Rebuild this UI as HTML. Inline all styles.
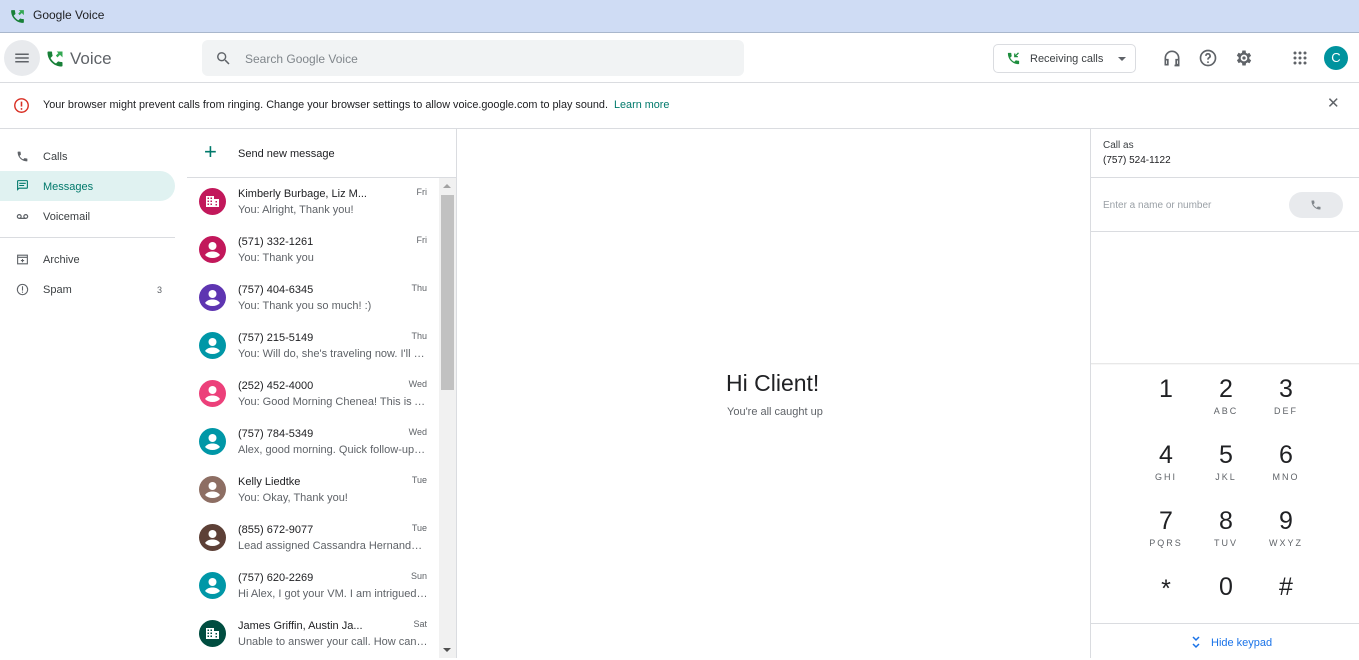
<!DOCTYPE html><html><head><meta charset="utf-8"><style>
*{box-sizing:border-box;margin:0;padding:0}
body{width:1359px;height:658px;overflow:hidden;font-family:"Liberation Sans",Arial,sans-serif;background:#fff;position:relative;color:#202124}
.a{position:absolute}
.row{position:absolute;left:187px;width:252px;height:48px}
.av{position:absolute;left:12px;top:8px;width:27px;height:27px;border-radius:50%}
.t{position:absolute;left:51px;top:8px;font-size:11px;color:#202124;white-space:nowrap}
.s{position:absolute;left:51px;top:24px;font-size:11px;color:#5f6368;white-space:nowrap;width:190px;overflow:hidden;text-overflow:ellipsis}
.d{position:absolute;right:12px;top:7px;font-size:9px;color:#5f6368}
.k{position:absolute;width:60px;text-align:center}
.k b{display:block;font-weight:normal;font-size:25px;color:#202124;line-height:26px}
.k i{display:block;font-style:normal;font-size:9px;letter-spacing:2px;color:#5f6368;margin-top:4px}
.nav{position:absolute;left:43px;font-size:11px;color:#3c4043}
</style></head><body>
<div class="a" style="left:0;top:0;width:1359px;height:33px;background:#cfdcf4;border-bottom:1px solid #a9b7cc"></div>
<svg class="a" style="left:9px;top:8px" width="17" height="17" viewBox="0 0 24 24"><path fill="#188038" d="M6.6 10.8c1.4 2.8 3.8 5.1 6.6 6.6l2.2-2.2c.3-.3.7-.4 1-.2 1.1.4 2.3.6 3.6.6.6 0 1 .4 1 1V20c0 .6-.4 1-1 1C10.6 21 3 13.4 3 4c0-.6.4-1 1-1h3.5c.6 0 1 .4 1 1 0 1.3.2 2.5.6 3.6.1.3 0 .7-.2 1z"/><path fill="#34a853" d="M14 3h7v7l-3-3-3 3-2-2 3-3z"/></svg>
<div class="a" style="left:33px;top:8px;font-size:12px;color:#202124">Google Voice</div>
<div class="a" style="left:0;top:82px;width:1359px;height:1px;background:#dadce0"></div>
<div class="a" style="left:4px;top:40px;width:36px;height:36px;border-radius:50%;background:#e8eaed"></div>
<svg class="a" style="left:13px;top:49px" width="18" height="18" viewBox="0 0 24 24"><path fill="#5f6368" d="M3 6h18v2H3zm0 5h18v2H3zm0 5h18v2H3z"/></svg>
<svg class="a" style="left:45px;top:49px" width="20" height="20" viewBox="0 0 24 24"><path fill="#188038" d="M6.6 10.8c1.4 2.8 3.8 5.1 6.6 6.6l2.2-2.2c.3-.3.7-.4 1-.2 1.1.4 2.3.6 3.6.6.6 0 1 .4 1 1V20c0 .6-.4 1-1 1C10.6 21 3 13.4 3 4c0-.6.4-1 1-1h3.5c.6 0 1 .4 1 1 0 1.3.2 2.5.6 3.6.1.3 0 .7-.2 1z"/><path fill="#34a853" d="M14 3h7v7l-3-3-3 3-2-2 3-3z"/></svg>
<div class="a" style="left:70px;top:49px;font-size:17px;color:#5f6368">Voice</div>
<div class="a" style="left:202px;top:40px;width:542px;height:36px;border-radius:6px;background:#f1f3f4"></div>
<svg class="a" style="left:215px;top:50px" width="17" height="17" viewBox="0 0 24 24"><path fill="#5f6368" d="M15.5 14h-.8l-.3-.3A6.5 6.5 0 1 0 9.5 16c1.6 0 3.1-.6 4.2-1.6l.3.3v.8l5 5 1.5-1.5-5-5zm-6 0C7 14 5 12 5 9.5S7 5 9.5 5 14 7 14 9.5 12 14 9.5 14z"/></svg>
<div class="a" style="left:245px;top:52px;font-size:12px;color:#80868b">Search Google Voice</div>
<div class="a" style="left:993px;top:44px;width:143px;height:29px;border:1px solid #dadce0;border-radius:5px"></div>
<svg class="a" style="left:1006px;top:51px" width="15" height="15" viewBox="0 0 24 24"><path fill="#1e8e3e" d="M6.6 10.8c1.4 2.8 3.8 5.1 6.6 6.6l2.2-2.2c.3-.3.7-.4 1-.2 1.1.4 2.3.6 3.6.6.6 0 1 .4 1 1V20c0 .6-.4 1-1 1C10.6 21 3 13.4 3 4c0-.6.4-1 1-1h3.5c.6 0 1 .4 1 1 0 1.3.2 2.5.6 3.6.1.3 0 .7-.2 1z"/><path fill="none" stroke="#1e8e3e" stroke-width="2" d="M20 3l-6 6m0-5v5h5"/></svg>
<div class="a" style="left:1030px;top:53px;font-size:11px;color:#3c4043">Receiving calls</div>
<div class="a" style="left:1118px;top:57px;border:4px solid transparent;border-top-color:#5f6368"></div>
<svg class="a" style="left:1162px;top:48px" width="20" height="20" viewBox="0 0 24 24"><path fill="none" stroke="#5f6368" stroke-width="2" d="M4 17v-5a8 8 0 0 1 16 0v5M4 14h3v6H4zM17 14h3v6h-3zM20 20v1h-5"/></svg>
<svg class="a" style="left:1198px;top:48px" width="20" height="20" viewBox="0 0 24 24"><circle cx="12" cy="12" r="9" fill="none" stroke="#5f6368" stroke-width="2"/><path fill="none" stroke="#5f6368" stroke-width="2" d="M9.5 9.5a2.5 2.5 0 1 1 3.5 2.3c-.7.4-1 .9-1 1.7v.5"/><circle cx="12" cy="17" r="1.1" fill="#5f6368"/></svg>
<svg class="a" style="left:1234px;top:48px" width="20" height="20" viewBox="0 0 24 24"><path fill="#5f6368" d="M19.4 13a7.5 7.5 0 0 0 0-2l2.1-1.6-2-3.5-2.5 1a7 7 0 0 0-1.7-1L15 3h-4l-.4 2.7c-.6.3-1.2.6-1.7 1l-2.5-1-2 3.5L6.6 11a7.5 7.5 0 0 0 0 2l-2.1 1.6 2 3.5 2.5-1c.5.4 1.1.7 1.7 1L11 21h4l.4-2.7c.6-.3 1.2-.6 1.7-1l2.5 1 2-3.5zM13 16a4 4 0 1 1 0-8 4 4 0 0 1 0 8z" transform="translate(-1 0)"/><circle cx="12" cy="12" r="2" fill="#5f6368"/></svg>
<svg class="a" style="left:1292px;top:50px" width="16" height="16" viewBox="0 0 16 16" fill="#5f6368"><circle cx="3" cy="3" r="1.5"/><circle cx="8" cy="3" r="1.5"/><circle cx="13" cy="3" r="1.5"/><circle cx="3" cy="8" r="1.5"/><circle cx="8" cy="8" r="1.5"/><circle cx="13" cy="8" r="1.5"/><circle cx="3" cy="13" r="1.5"/><circle cx="8" cy="13" r="1.5"/><circle cx="13" cy="13" r="1.5"/></svg>
<div class="a" style="left:1324px;top:46px;width:24px;height:24px;border-radius:50%;background:#00939e;color:#fff;font-size:13px;text-align:center;line-height:24px">C</div>
<svg class="a" style="left:13px;top:97px" width="17" height="17" viewBox="0 0 24 24"><circle cx="12" cy="12" r="9.5" fill="none" stroke="#d93025" stroke-width="2"/><path stroke="#d93025" stroke-width="2.2" d="M12 6.5v7"/><circle cx="12" cy="16.8" r="1.3" fill="#d93025"/></svg>
<div class="a" style="left:43px;top:99px;font-size:10.85px;color:#202124;white-space:nowrap">Your browser might prevent calls from ringing. Change your browser settings to allow voice.google.com to play sound. <span style="color:#00796b;margin-left:3px">Learn more</span></div>
<div class="a" style="left:1327px;top:94px;font-size:15px;color:#5f6368">✕</div>
<div class="a" style="left:0;top:128px;width:1359px;height:1px;background:#dadce0"></div>
<svg class="a" style="left:16px;top:150px" width="13" height="13" viewBox="0 0 24 24"><path fill="#5f6368" d="M6.6 10.8c1.4 2.8 3.8 5.1 6.6 6.6l2.2-2.2c.3-.3.7-.4 1-.2 1.1.4 2.3.6 3.6.6.6 0 1 .4 1 1V20c0 .6-.4 1-1 1C10.6 21 3 13.4 3 4c0-.6.4-1 1-1h3.5c.6 0 1 .4 1 1 0 1.3.2 2.5.6 3.6.1.3 0 .7-.2 1z"/></svg>
<div class="nav" style="top:151px">Calls</div>
<div class="a" style="left:0;top:171px;width:175px;height:30px;background:#e0f2f1;border-radius:0 15px 15px 0"></div>
<svg class="a" style="left:16px;top:179px" width="13" height="13" viewBox="0 0 24 24"><path fill="#00796b" d="M20 2H4a2 2 0 0 0-2 2v18l4-4h14a2 2 0 0 0 2-2V4a2 2 0 0 0-2-2zm0 14H5.2L4 17.2V4h16zM6 7h12v2H6zm0 4h9v2H6z"/></svg>
<div class="nav" style="top:181px;color:#00796b">Messages</div>
<svg class="a" style="left:15px;top:210px" width="15" height="13" viewBox="0 0 24 24"><path fill="none" stroke="#5f6368" stroke-width="2.2" d="M6 15.5a3.5 3.5 0 1 1 0-7 3.5 3.5 0 0 1 0 7h12a3.5 3.5 0 1 1 0-7 3.5 3.5 0 0 1 0 7"/></svg>
<div class="nav" style="top:211px">Voicemail</div>
<div class="a" style="left:0;top:237px;width:175px;height:1px;background:#dadce0"></div>
<svg class="a" style="left:16px;top:253px" width="13" height="13" viewBox="0 0 24 24"><path fill="none" stroke="#5f6368" stroke-width="2" d="M3 4h18v16H3zM3 8h18M12 11v6m-3-3h6"/></svg>
<div class="nav" style="top:254px">Archive</div>
<svg class="a" style="left:16px;top:283px" width="13" height="13" viewBox="0 0 24 24"><circle cx="12" cy="12" r="9.5" fill="none" stroke="#5f6368" stroke-width="2"/><path stroke="#5f6368" stroke-width="2" d="M12 6v8M12 16v2"/></svg>
<div class="nav" style="top:284px">Spam</div>
<div class="a" style="left:157px;top:285px;font-size:9px;color:#5f6368">3</div>
<div class="a" style="left:204px;top:142px;font-size:22px;color:#00796b;line-height:20px;font-weight:300">+</div>
<div class="a" style="left:238px;top:148px;font-size:11px;color:#202124">Send new message</div>
<div class="a" style="left:187px;top:177px;width:269px;height:1px;background:#dadce0"></div>
<div class="a" style="left:456px;top:129px;width:1px;height:529px;background:#dadce0"></div>
<div class="a" style="left:439px;top:178px;width:17px;height:480px;background:#f1f1f1"></div>
<div class="a" style="left:441px;top:195px;width:13px;height:195px;background:#c1c1c1"></div>
<div class="a" style="left:443px;top:184px;border:4px solid transparent;border-bottom-color:#a3a3a3;border-top:0"></div>
<div class="a" style="left:443px;top:648px;border:4px solid transparent;border-top-color:#505050;border-bottom:0"></div>
<div id="rows"></div>
<div class="a" style="left:726px;top:370px;font-size:23px;color:#202124">Hi Client!</div>
<div class="a" style="left:727px;top:406px;font-size:11px;color:#5f6368">You're all caught up</div>
<div class="a" style="left:1090px;top:129px;width:1px;height:529px;background:#dadce0"></div>
<div class="a" style="left:1103px;top:140px;font-size:10px;color:#3c4043">Call as</div>
<div class="a" style="left:1103px;top:155px;font-size:10px;color:#202124">(757) 524-1122</div>
<div class="a" style="left:1091px;top:177px;width:268px;height:1px;background:#dadce0"></div>
<div class="a" style="left:1103px;top:200px;font-size:10px;color:#9aa0a6">Enter a name or number</div>
<div class="a" style="left:1289px;top:192px;width:54px;height:26px;border-radius:13px;background:#e8eaed"></div>
<svg class="a" style="left:1310px;top:199px" width="12" height="12" viewBox="0 0 24 24"><path fill="#80868b" d="M6.6 10.8c1.4 2.8 3.8 5.1 6.6 6.6l2.2-2.2c.3-.3.7-.4 1-.2 1.1.4 2.3.6 3.6.6.6 0 1 .4 1 1V20c0 .6-.4 1-1 1C10.6 21 3 13.4 3 4c0-.6.4-1 1-1h3.5c.6 0 1 .4 1 1 0 1.3.2 2.5.6 3.6.1.3 0 .7-.2 1z"/></svg>
<div class="a" style="left:1091px;top:231px;width:268px;height:1px;background:#dadce0"></div>
<div class="a" style="left:1091px;top:363px;width:268px;height:2px;background:linear-gradient(#e0e0e0,#fff)"></div>
<div class="k" style="left:1136px;top:376px"><b>1</b></div>
<div class="k" style="left:1196px;top:376px"><b>2</b><i>ABC</i></div>
<div class="k" style="left:1256px;top:376px"><b>3</b><i>DEF</i></div>
<div class="k" style="left:1136px;top:442px"><b>4</b><i>GHI</i></div>
<div class="k" style="left:1196px;top:442px"><b>5</b><i>JKL</i></div>
<div class="k" style="left:1256px;top:442px"><b>6</b><i>MNO</i></div>
<div class="k" style="left:1136px;top:508px"><b>7</b><i>PQRS</i></div>
<div class="k" style="left:1196px;top:508px"><b>8</b><i>TUV</i></div>
<div class="k" style="left:1256px;top:508px"><b>9</b><i>WXYZ</i></div>
<div class="k" style="left:1136px;top:576px"><b>*</b></div>
<div class="k" style="left:1196px;top:574px"><b>0</b></div>
<div class="k" style="left:1256px;top:574px"><b>#</b></div>
<div class="a" style="left:1091px;top:623px;width:268px;height:1px;background:#dadce0"></div>
<svg class="a" style="left:1190px;top:635px" width="12" height="14" viewBox="0 0 12 14"><path fill="none" stroke="#1a73e8" stroke-width="1.5" d="M3 2l3 3 3-3M3 9l3 3 3-3"/></svg>
<div class="a" style="left:1211px;top:637px;font-size:11px;color:#1a73e8">Hide keypad</div>
<script>
var P='<svg width="27" height="27" viewBox="0 0 27 27"><circle cx="13.5" cy="10" r="4" fill="#fff"/><path d="M6 19c2-3 5-3.5 7.5-3.5S19 16 21 19c-2 2-4.5 3-7.5 3S8 21 6 19z" fill="#fff"/></svg>';
var B='<svg width="27" height="27" viewBox="0 0 27 27"><path fill="#fff" d="M7 8h8v11H7zM15 11h5v8h-5z"/><path fill="#c2185b" d="M8.5 9.5h1.5v1.5H8.5zM11.5 9.5H13v1.5h-1.5zM8.5 12.5h1.5V14H8.5zM11.5 12.5H13V14h-1.5zM8.5 15.5h1.5V17H8.5zM11.5 15.5H13V17h-1.5zM16.5 13h1.5v1.5h-1.5zM16.5 16h1.5v1.5h-1.5z"/></svg>';
var R=[["#c2185b",B,"Kimberly Burbage, Liz M...","You: Alright, Thank you!","Fri"],
["#c2185b",P,"(571) 332-1261","You: Thank you","Fri"],
["#5e35b1",P,"(757) 404-6345","You: Thank you so much! :)","Thu"],
["#0097a7",P,"(757) 215-5149","You: Will do, she's traveling now. I'll sh...","Thu"],
["#ec407a",P,"(252) 452-4000","You: Good Morning Chenea! This is Al...","Wed"],
["#0097a7",P,"(757) 784-5349","Alex, good morning. Quick follow-up t...","Wed"],
["#8d6e63",P,"Kelly Liedtke","You: Okay, Thank you!","Tue"],
["#5d4037",P,"(855) 672-9077","Lead assigned Cassandra Hernandez ...","Tue"],
["#0097a7",P,"(757) 620-2269","Hi Alex, I got your VM. I am intrigued ...","Sun"],
["#004d40",B.replace(/#c2185b/g,'#004d40'),"James Griffin, Austin Ja...","Unable to answer your call. How can I...","Sat"]];
var h='';R.forEach(function(r,i){h+='<div class="row" style="top:'+(180+i*48)+'px"><div class="av" style="background:'+r[0]+'">'+r[1]+'</div><div class="t">'+r[2]+'</div><div class="s">'+r[3]+'</div><div class="d">'+r[4]+'</div></div>'});
document.getElementById('rows').innerHTML=h;
</script>
</body></html>
